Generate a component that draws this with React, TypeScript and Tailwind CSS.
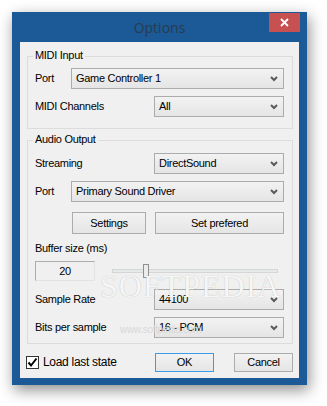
import React from "react";

const font = { fontFamily: '"Liberation Sans", Arial, sans-serif' };

function Chevron() {
  return (
    <svg width="8" height="6" viewBox="0 0 8 6" className="shrink-0">
      <polyline points="1,1 4,4 7,1" fill="none" stroke="#5a5a5a" strokeWidth="2" />
    </svg>
  );
}

function Combo({ value }: { value: string }) {
  return (
    <div className="flex-1 h-[21px] flex items-center justify-between pl-[4px] pr-[5px] border border-[#acacac] bg-gradient-to-b from-[#f2f2f2] to-[#e5e5e5] text-black">
      <span>{value}</span>
      <Chevron />
    </div>
  );
}

function Btn({ label, className }: { label: string; className: string }) {
  return (
    <div
      className={
        "flex items-center justify-center bg-gradient-to-b from-[#f2f2f2] to-[#e5e5e5] text-black " +
        className
      }
    >
      {label}
    </div>
  );
}

function Group({ title, children, className }: { title: string; children: React.ReactNode; className: string }) {
  return (
    <div className={"relative border border-[#dcdcdc] pl-[7px] pr-[8px] " + className}>
      <span className="absolute left-[5px] top-[-8px] px-[2px] bg-[#f0f0f0] leading-[13px]">{title}</span>
      {children}
    </div>
  );
}

export default function App() {
  return (
    <div className="w-[327px] h-[406px] bg-white pl-[12px] pt-[12px] text-[11px] tracking-[-0.3px]" style={font}>
      <div className="w-[295px] h-[373px] bg-[#1b5a96] flex flex-col shadow-[2px_5px_14px_rgba(0,0,0,0.45)]">
        <div className="relative h-[30px] flex items-center justify-center">
          <span
            className="text-[14px] tracking-normal text-[#2b3a4c] mt-[1px]"
            style={{ fontFamily: '"Open Sans", "Noto Sans", sans-serif' }}
          >
            Options
          </span>
          <div className="absolute right-[7px] top-[1px] w-[31px] h-[19px] bg-[#c75050] flex items-center justify-center">
            <svg width="9" height="9" viewBox="0 0 9 9">
              <path d="M1 1 L8 8 M8 1 L1 8" stroke="white" strokeWidth="1.8" />
            </svg>
          </div>
        </div>

        <div className="relative mx-[8px] h-[336px] bg-[#f0f0f0] pt-[14px] pl-[7px] pr-[6px] flex flex-col leading-[13px]">
          <Group title="MIDI Input" className="h-[73px] pt-[11px] flex flex-col gap-[7px]">
            <div className="flex items-center">
              <span className="w-[36px]">Port</span>
              <Combo value="Game Controller 1" />
            </div>
            <div className="flex items-center">
              <span className="w-[119px]">MIDI Channels</span>
              <Combo value="All" />
            </div>
          </Group>

          <Group title="Audio Output" className="mt-[11px] h-[204px] pt-[12px] flex flex-col">
            <div className="flex items-center">
              <span className="w-[119px]">Streaming</span>
              <Combo value="DirectSound" />
            </div>
            <div className="flex items-center mt-[7px]">
              <span className="w-[36px]">Port</span>
              <Combo value="Primary Sound Driver" />
            </div>
            <div className="flex mt-[10px] h-[22px]">
              <Btn label="Settings" className="ml-[37px] w-[74px] border border-[#acacac]" />
              <Btn label="Set prefered" className="ml-[9px] flex-1 border border-[#acacac]" />
            </div>
            <div className="mt-[8px] h-[13px]">Buffer size (ms)</div>
            <div className="flex items-center mt-[6px] h-[20px]">
              <div className="w-[60px] h-[20px] flex items-center justify-center border border-[#abadb3] border-r-[#e3e3e3] border-b-[#e3e3e3] bg-[#f0f0f0]">
                20
              </div>
              <div className="relative ml-[17px] w-[166px] h-[4px] border border-[#d6d6d6] bg-[#e7eaea]">
                <div className="absolute left-[30px] top-[-6px] w-[6px] h-[14px] border border-[#8f8f8f] bg-[#ececec]" />
              </div>
            </div>
            <div className="flex items-center mt-[8px]">
              <span className="w-[119px]">Sample Rate</span>
              <Combo value="44100" />
            </div>
            <div className="flex items-center mt-[7px]">
              <span className="w-[119px]">Bits per sample</span>
              <Combo value="16 - PCM" />
            </div>
          </Group>

          <div className="flex items-center mt-[9px] h-[19px] -ml-[1px]">
            <div className="w-[13px] h-[13px] border border-[#333333] bg-white flex items-center justify-center">
              <svg width="11" height="11" viewBox="0 0 11 11">
                <polyline points="1.5,5.5 4,8.5 9.5,1.5" fill="none" stroke="black" strokeWidth="2" />
              </svg>
            </div>
            <span className="ml-[4px] text-[12px]">Load last state</span>
            <Btn label="OK" className="ml-auto w-[59px] h-[19px] border border-[#3c9be6]" />
            <Btn label="Cancel" className="ml-[20px] w-[59px] h-[19px] border border-[#acacac]" />
          </div>

          <div
            className="absolute left-[80px] top-[238px] text-[32px] tracking-[1px] text-[#f6f6f6] pointer-events-none"
            style={{ fontFamily: '"Liberation Serif", serif', textShadow: "0 0 1px rgba(0,0,0,0.25)" }}
          >
            SOFTPEDIA
          </div>
          <div className="absolute left-[100px] top-[281px] text-[10px] text-[#d8d8d8] pointer-events-none">
            www.softpedia.com
          </div>
        </div>
      </div>
    </div>
  );
}
